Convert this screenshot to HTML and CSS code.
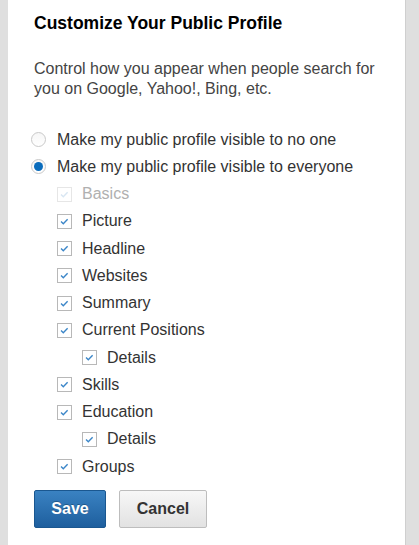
FILE: index.html
```html
<!DOCTYPE html>
<html>
<head>
<meta charset="utf-8">
<link rel="stylesheet" href="styles.css">
</head>
<body>
<div class="card">
  <h1 class="title">Customize Your Public Profile</h1>
  <p class="intro">Control how you appear when people search for you on Google, Yahoo!, Bing, etc.</p>
  <ul class="options">
    <li class="row"><span class="radio"></span><span>Make my public profile visible to no one</span></li>
    <li class="row"><span class="radio on"></span><span>Make my public profile visible to everyone</span></li>
    <li class="row l1 disabled"><span class="check"><svg viewBox="0 0 15 15"><path d="M3.5 7.5l2.6 2.6 5-5.2"/></svg></span><span>Basics</span></li>
    <li class="row l1"><span class="check"><svg viewBox="0 0 15 15"><path d="M3.5 7.5l2.6 2.6 5-5.2"/></svg></span><span>Picture</span></li>
    <li class="row l1"><span class="check"><svg viewBox="0 0 15 15"><path d="M3.5 7.5l2.6 2.6 5-5.2"/></svg></span><span>Headline</span></li>
    <li class="row l1"><span class="check"><svg viewBox="0 0 15 15"><path d="M3.5 7.5l2.6 2.6 5-5.2"/></svg></span><span>Websites</span></li>
    <li class="row l1"><span class="check"><svg viewBox="0 0 15 15"><path d="M3.5 7.5l2.6 2.6 5-5.2"/></svg></span><span>Summary</span></li>
    <li class="row l1"><span class="check"><svg viewBox="0 0 15 15"><path d="M3.5 7.5l2.6 2.6 5-5.2"/></svg></span><span>Current Positions</span></li>
    <li class="row l2"><span class="check"><svg viewBox="0 0 15 15"><path d="M3.5 7.5l2.6 2.6 5-5.2"/></svg></span><span>Details</span></li>
    <li class="row l1"><span class="check"><svg viewBox="0 0 15 15"><path d="M3.5 7.5l2.6 2.6 5-5.2"/></svg></span><span>Skills</span></li>
    <li class="row l1"><span class="check"><svg viewBox="0 0 15 15"><path d="M3.5 7.5l2.6 2.6 5-5.2"/></svg></span><span>Education</span></li>
    <li class="row l2"><span class="check"><svg viewBox="0 0 15 15"><path d="M3.5 7.5l2.6 2.6 5-5.2"/></svg></span><span>Details</span></li>
    <li class="row l1"><span class="check"><svg viewBox="0 0 15 15"><path d="M3.5 7.5l2.6 2.6 5-5.2"/></svg></span><span>Groups</span></li>
  </ul>
  <div class="actions">
    <button class="btn primary">Save</button>
    <button class="btn secondary">Cancel</button>
  </div>
</div>
</body>
</html>
```
FILE: styles.css
```css
html, body {
  margin: 0;
  padding: 0;
  background: #dfdfdf;
  height: 100%;
}
body {
  font-family: "Liberation Sans", Arial, sans-serif;
  color: #333;
}
.card {
  margin-left: 8px;
  width: 398px;
  min-height: 545px;
  background: #fff;
  border-right: 1px solid #cfcfcf;
  padding: 0 0 0 26px;
  box-sizing: border-box;
  overflow: hidden;
}
.title {
  margin: 0;
  padding-top: 13px;
  font-size: 17.5px;
  line-height: 20px;
  font-weight: bold;
  color: #000;
}
.intro {
  margin: 26px 0 0;
  font-size: 16px;
  line-height: 20px;
  color: #444;
  width: 360px;
}
.options {
  list-style: none;
  margin: 27px 0 0;
  padding: 0;
}
.row {
  display: flex;
  align-items: center;
  height: 27.25px;
  font-size: 16px;
  color: #333;
}
.radio {
  width: 15px;
  height: 15px;
  border: 1px solid #c9c9c9;
  border-radius: 50%;
  box-sizing: border-box;
  margin: 0 11px 0 -3px;
  flex: none;
  display: flex;
  align-items: center;
  justify-content: center;
  background: linear-gradient(#f6f6f6, #fff);
}
.radio.on::after {
  content: "";
  width: 9px;
  height: 9px;
  border-radius: 50%;
  background: #0a6cbc;
}
.l1 { padding-left: 23px; }
.l2 { padding-left: 48px; }
.check {
  width: 15px;
  height: 15px;
  border: 1px solid #b8b8b8;
  box-sizing: border-box;
  margin-right: 10px;
  flex: none;
  display: flex;
  background: #fff;
}
.check svg {
  width: 13px;
  height: 13px;
}
.check path {
  fill: none;
  stroke: #3b86c8;
  stroke-width: 1.6;
}
.disabled { color: #b0b0b0; }
.disabled .check { border-color: #e6e6e6; }
.disabled .check path { stroke: #d8e6f2; }
.actions {
  display: flex;
  gap: 13px;
  margin-top: 10px;
}
.btn {
  height: 38px;
  font-family: "Liberation Sans", Arial, sans-serif;
  font-size: 16px;
  font-weight: bold;
  border-radius: 2px;
  padding: 0;
  cursor: pointer;
}
.primary {
  width: 72px;
  color: #fff;
  background: linear-gradient(#3a82c2, #1e5f9e);
  border: 1px solid #1a5790;
  text-shadow: 0 -1px 0 rgba(0,0,0,0.25);
}
.secondary {
  width: 88px;
  color: #333;
  background: linear-gradient(#f7f7f7, #e2e2e2);
  border: 1px solid #bdbdbd;
}
```
